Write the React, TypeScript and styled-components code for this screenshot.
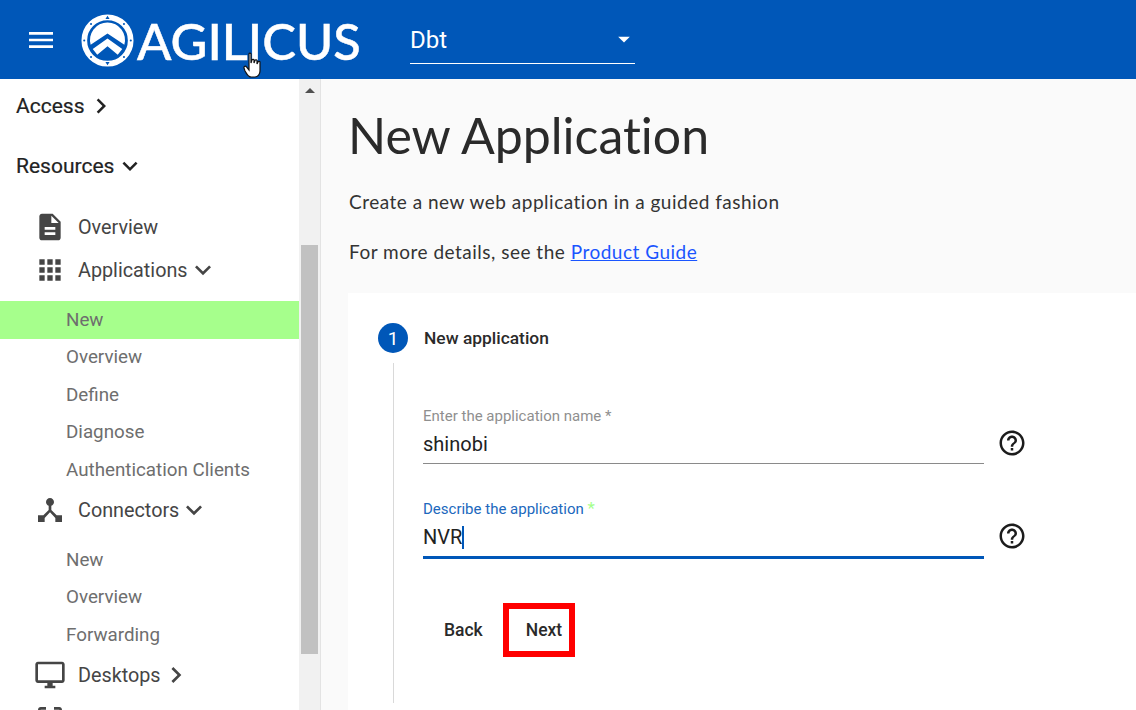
import React from "react";
import styled, { createGlobalStyle } from "styled-components";
import {
  MdMenu,
  MdDescription,
  MdApps,
  MdDeviceHub,
  MdOutlineDesktopWindows,
  MdKeyboardArrowDown,
  MdKeyboardArrowRight,
  MdHelpOutline,
  MdCropFree,
  MdArrowDropDown,
} from "react-icons/md";

const Global = createGlobalStyle`
  html, body { margin: 0; padding: 0; background: #fff; }
  * { box-sizing: border-box; }
  body { font-family: Roboto, "Liberation Sans", sans-serif; }
`;

const Page = styled.div`
  width: 1136px;
  height: 710px;
  overflow: hidden;
  display: flex;
  flex-direction: column;
  position: relative;
`;

const Toolbar = styled.header`
  height: 79px;
  flex: none;
  background: #0057b8;
  color: #fff;
  display: flex;
  align-items: center;
  padding-left: 25px;
`;

const MenuButton = styled.div`
  width: 32px;
  display: flex;
  font-size: 32px;
`;

const Logo = styled.div`
  margin-left: 24px;
  display: flex;
  align-items: center;
  width: 279px;
`;

const EmblemSvg = styled.svg`
  width: 53px;
  height: 53px;
  flex: none;
  margin-top: 2px;
`;

const LogoText = styled.span`
  font-family: Lato, sans-serif;
  font-size: 50.6px;
  font-weight: 500;
  line-height: 1;
  margin: 3px 0 0 3px;
  letter-spacing: 0;
  -webkit-text-stroke: 0.5px #fff;
`;

const OrgSelect = styled.div`
  margin-left: 50px;
  margin-top: 2px;
  width: 225px;
  height: 46px;
  border-bottom: 1px solid #fff;
  display: flex;
  align-items: center;
  justify-content: space-between;
  font-size: 24px;
  padding-bottom: 1px;
`;

const Caret = styled.span`
  display: flex;
  font-size: 28px;
  margin: 0 -3px 2px 0;
`;

const Body = styled.div`
  flex: 1;
  min-height: 0;
  display: flex;
`;

const Sidebar = styled.nav`
  width: 299px;
  flex: none;
  overflow: hidden;
  background: #fff;
  color: #3d3d3d;
`;

const TopLink = styled.div<{ $h: number }>`
  height: ${(p) => p.$h}px;
  display: flex;
  align-items: center;
  padding: 0 0 2px 16px;
  font-size: 21px;
  font-weight: 400;
  color: #222;
  -webkit-text-stroke: 0.2px #222;
  svg { font-size: 30px; margin-left: 1px; }
`;

const NavRow = styled.div<{ $h: number }>`
  height: ${(p) => p.$h}px;
  display: flex;
  align-items: center;
  font-size: 19.8px;
  color: #454545;
`;

const NavIcon = styled.span`
  width: 78px;
  padding-right: 12px;
  display: flex;
  justify-content: flex-end;
  font-size: 32px;
  flex: none;
`;

const Chevron = styled.span`
  display: flex;
  font-size: 32px;
  margin-left: -1px;
`;

const SubLink = styled.div<{ $h: number; $active?: boolean }>`
  height: ${(p) => p.$h}px;
  display: flex;
  align-items: center;
  padding: 0 0 1px 66px;
  font-size: 18.8px;
  color: #6e6e6e;
  background: ${(p) => (p.$active ? "#a6ff8c" : "transparent")};
`;

const Scrollbar = styled.div`
  width: 22px;
  flex: none;
  background: #f1f1f1;
  border-right: 1px solid #e3e3e3;
  padding: 0 2px;
`;

const ScrollArrow = styled.div`
  width: 0;
  height: 0;
  margin: 9px 0 0 4px;
  border-left: 5px solid transparent;
  border-right: 5px solid transparent;
  border-bottom: 5px solid #505050;
`;

const ScrollThumb = styled.div`
  width: 17px;
  height: 409px;
  margin-top: 152px;
  background: #c1c1c1;
`;

const Main = styled.main`
  flex: 1;
  min-width: 0;
  background: #fafafa;
  padding: 22px 0 0 27px;
`;

const Title = styled.h1`
  margin: 0;
  font-family: Lato, sans-serif;
  font-weight: 400;
  font-size: 50px;
  line-height: 68px;
  color: #2a2a2a;
  letter-spacing: 0;
  font-variant-ligatures: none;
`;

const Lead = styled.p`
  margin: 0 0 0 1px;
  font-family: Lato, sans-serif;
  font-size: 19px;
  line-height: 24px;
  color: #333;
  letter-spacing: 0.5px;
  &:first-of-type { margin-top: 21px; }
  & + & { margin-top: 26px; }
  a { color: #1a55ff; text-decoration: underline; }
`;

const Card = styled.section`
  margin-top: 29px;
  height: 417px;
  background: #fff;
  padding: 30px 0 0 30px;
`;

const StepHeader = styled.div`
  display: flex;
  align-items: center;
  height: 30px;
`;

const StepBadge = styled.span`
  width: 30px;
  height: 30px;
  border-radius: 50%;
  background: #0057b8;
  color: #fff;
  font-size: 19px;
  display: flex;
  align-items: center;
  justify-content: center;
`;

const StepLabel = styled.span`
  margin-left: 16px;
  font-size: 17.4px;
  font-weight: 500;
  color: #2a2a2a;
`;

const StepBody = styled.div`
  margin: 10px 0 0 15px;
  height: 340px;
  border-left: 1px solid #d9d9d9;
  padding: 44px 0 0 29px;
`;

const FieldRow = styled.div`
  display: flex;
  align-items: flex-start;
  & + & { margin-top: 36px; }
`;

const Field = styled.div<{ $focused?: boolean }>`
  width: 561px;
  height: 56px;
  box-sizing: content-box;
  border-bottom: ${(p) => (p.$focused ? "3px solid #0057b8" : "1px solid #8a8a8a")};
`;

const FieldLabel = styled.div<{ $focused?: boolean }>`
  font-size: 15px;
  line-height: 18px;
  color: ${(p) => (p.$focused ? "#2068bd" : "#8f8f8f")};
`;

const Star = styled.span<{ $focused?: boolean }>`
  color: ${(p) => (p.$focused ? "#a6ff8c" : "#8f8f8f")};
  font-size: ${(p) => (p.$focused ? "17px" : "15px")};
  line-height: 1;
`;

const FieldValue = styled.div`
  margin-top: 6px;
  font-size: 20px;
  line-height: 26px;
  color: #222;
  display: flex;
  align-items: center;
`;

const TextCaret = styled.span`
  width: 2px;
  height: 23px;
  background: #0057b8;
`;

const HelpIcon = styled.span`
  margin: 21px 0 0 13px;
  display: flex;
  font-size: 30px;
  color: #1c1c1c;
`;

const Actions = styled.div`
  margin-top: 44px;
  display: flex;
  align-items: center;
  margin-left: 1px;
`;

const TextButton = styled.div<{ $highlighted?: boolean }>`
  height: 54px;
  display: flex;
  align-items: center;
  font-size: 17.5px;
  font-weight: 500;
  color: #2a2a2a;
  padding: ${(p) => (p.$highlighted ? "0 7px 0 17px" : "0 20px")};
  border: ${(p) => (p.$highlighted ? "6px solid #ff0000" : "0")};
`;

const Pointer = styled.svg`
  position: absolute;
  left: 243px;
  top: 52px;
  width: 18px;
  height: 26px;
`;

const Emblem = () => (
  <EmblemSvg viewBox="0 0 56 56">
    <circle cx="28" cy="28" r="24.5" fill="none" stroke="#fff" strokeWidth="6" />
    <path d="M10.2 32.5 L28 20.5 L45.8 32.5 A18.5 18.5 0 1 0 10.2 32.5 Z" fill="#fff" />
    <path d="M12.4 37 L28 26 L43.6 37 L38.8 43 L28 34 L17.2 43 Z" fill="#fff" />
    <path d="M28 1.8 L30.2 5.2 L25.8 5.2 Z M28 54.2 L30.2 50.8 L25.8 50.8 Z" fill="#0057b8" />
    <circle cx="3.4" cy="28" r="1.1" fill="#0057b8" />
    <circle cx="52.6" cy="28" r="1.1" fill="#0057b8" />
    <circle cx="10.6" cy="10.6" r="1.1" fill="#0057b8" />
    <circle cx="45.4" cy="10.6" r="1.1" fill="#0057b8" />
    <circle cx="10.6" cy="45.4" r="1.1" fill="#0057b8" />
    <circle cx="45.4" cy="45.4" r="1.1" fill="#0057b8" />
  </EmblemSvg>
);

export default function App() {
  return (
    <Page>
      <Global />
      <Toolbar>
        <MenuButton><MdMenu /></MenuButton>
        <Logo>
          <Emblem />
          <LogoText>AGILICUS</LogoText>
        </Logo>
        <OrgSelect>
          <span>Dbt</span>
          <Caret><MdArrowDropDown /></Caret>
        </OrgSelect>
      </Toolbar>
      <Body>
        <Sidebar>
          <TopLink $h={55}>Access<MdKeyboardArrowRight /></TopLink>
          <TopLink $h={65}>Resources<MdKeyboardArrowDown /></TopLink>
          <NavRow $h={56}><NavIcon><MdDescription /></NavIcon>Overview</NavRow>
          <NavRow $h={30}><NavIcon><MdApps /></NavIcon>Applications<Chevron><MdKeyboardArrowDown /></Chevron></NavRow>
          <SubLink $h={16} />
          <SubLink $h={38} $active>New</SubLink>
          <SubLink $h={37}>Overview</SubLink>
          <SubLink $h={38}>Define</SubLink>
          <SubLink $h={37}>Diagnose</SubLink>
          <SubLink $h={38}>Authentication Clients</SubLink>
          <NavRow $h={42}><NavIcon><MdDeviceHub /></NavIcon>Connectors<Chevron><MdKeyboardArrowDown /></Chevron></NavRow>
          <SubLink $h={10} />
          <SubLink $h={38}>New</SubLink>
          <SubLink $h={37}>Overview</SubLink>
          <SubLink $h={38}>Forwarding</SubLink>
          <NavRow $h={42}><NavIcon><MdOutlineDesktopWindows /></NavIcon>Desktops<Chevron><MdKeyboardArrowRight /></Chevron></NavRow>
          <NavRow $h={46}><NavIcon><MdCropFree /></NavIcon>Networks<Chevron><MdKeyboardArrowRight /></Chevron></NavRow>
        </Sidebar>
        <Scrollbar><ScrollArrow /><ScrollThumb /></Scrollbar>
        <Main>
          <Title>New Application</Title>
          <Lead>Create a new web application in a guided fashion</Lead>
          <Lead>For more details, see the <a href="#guide">Product Guide</a></Lead>
          <Card>
            <StepHeader>
              <StepBadge>1</StepBadge>
              <StepLabel>New application</StepLabel>
            </StepHeader>
            <StepBody>
              <FieldRow>
                <Field>
                  <FieldLabel>Enter the application name <Star>*</Star></FieldLabel>
                  <FieldValue>shinobi</FieldValue>
                </Field>
                <HelpIcon><MdHelpOutline /></HelpIcon>
              </FieldRow>
              <FieldRow>
                <Field $focused>
                  <FieldLabel $focused>Describe the application <Star $focused>*</Star></FieldLabel>
                  <FieldValue>NVR<TextCaret /></FieldValue>
                </Field>
                <HelpIcon><MdHelpOutline /></HelpIcon>
              </FieldRow>
              <Actions>
                <TextButton>Back</TextButton>
                <TextButton $highlighted>Next</TextButton>
              </Actions>
            </StepBody>
          </Card>
        </Main>
      </Body>
      <Pointer viewBox="0 0 18 26">
        <path
          d="M6 2 C6 .8 8 .8 8 2 L8 11 L9 8 C9 7 11 7 11 8 L11 11 L12 8.5 C12 7.5 14 7.5 14 8.5 L14 12 L15 10 C15 9 17 9 17 10 L17 19 C17 22 15 25 12 25 L8 25 C5 25 4 22 2 19 L1 16 C.5 14.5 2.5 13.5 3.5 15 L6 18 Z"
          fill="#fff"
          stroke="#111"
          strokeWidth="1.2"
        />
      </Pointer>
    </Page>
  );
}
